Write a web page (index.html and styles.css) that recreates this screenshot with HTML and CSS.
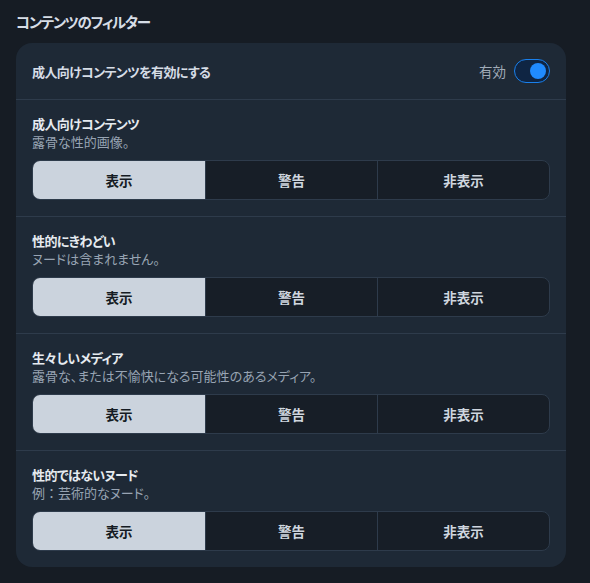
FILE: index.html
```html
<!DOCTYPE html>
<html lang="ja">
<head>
<meta charset="utf-8">
<link rel="stylesheet" href="styles.css">
</head>
<body>
<div class="page">
  <h2 class="heading">コンテンツのフィルター</h2>
  <div class="card">
    <div class="row header">
      <span class="header-label">成人向けコンテンツを有効にする</span>
      <div class="toggle-wrap">
        <span class="toggle-label">有効</span>
        <span class="toggle"><span class="knob"></span></span>
      </div>
    </div>
    <div class="row section">
      <div class="title">成人向けコンテンツ</div>
      <div class="desc">露骨な性的画像。</div>
      <div class="seg">
        <div class="opt active">表示</div>
        <div class="opt">警告</div>
        <div class="opt">非表示</div>
      </div>
    </div>
    <div class="row section">
      <div class="title">性的にきわどい</div>
      <div class="desc">ヌードは含まれません。</div>
      <div class="seg">
        <div class="opt active">表示</div>
        <div class="opt">警告</div>
        <div class="opt">非表示</div>
      </div>
    </div>
    <div class="row section">
      <div class="title">生々しいメディア</div>
      <div class="desc">露骨な、または不愉快になる可能性のあるメディア。</div>
      <div class="seg">
        <div class="opt active">表示</div>
        <div class="opt">警告</div>
        <div class="opt">非表示</div>
      </div>
    </div>
    <div class="row section">
      <div class="title">性的ではないヌード</div>
      <div class="desc">例<span class="fw">：</span>芸術的なヌード。</div>
      <div class="seg">
        <div class="opt active">表示</div>
        <div class="opt">警告</div>
        <div class="opt">非表示</div>
      </div>
    </div>
  </div>
</div>
</body>
</html>
```

FILE: styles.css
```css
* { box-sizing: border-box; }
html, body {
  margin: 0;
  padding: 0;
  background: #161c24;
}
body {
  font-family: "Noto Sans CJK JP", "Noto Sans", sans-serif;
  font-feature-settings: "palt";
  color: #d6dde6;
}
.page {
  padding: 11px 24px 16px 16px;
}
.heading {
  margin: 0 0 10px 0;
  font-size: 14.5px;
  letter-spacing: -1.3px;
  font-weight: 600;
  line-height: 22px;
  color: #d6dde6;
}
.card {
  background: #1e2936;
  border-radius: 16px;
  overflow: hidden;
}
.row {
  padding: 0 16px;
  border-top: 1px solid #2e3b4b;
}
.row:first-child { border-top: none; }
.header {
  height: 56px;
  display: flex;
  align-items: center;
  justify-content: space-between;
}
.header-label {
  font-size: 13px;
  letter-spacing: -0.6px;
  font-weight: 600;
  color: #d6dde6;
}
.toggle-wrap {
  display: flex;
  align-items: center;
  gap: 8px;
}
.toggle-label {
  font-size: 13.5px;
  color: #a0abb8;
}
.toggle {
  width: 36px;
  height: 24px;
  border-radius: 12px;
  border: 1.5px solid #1a80ec;
  background: #0f2543;
  display: flex;
  align-items: center;
  justify-content: flex-end;
  padding-right: 3px;
}
.knob {
  width: 16px;
  height: 16px;
  border-radius: 50%;
  background: #208bfe;
}
.section {
  padding-top: 15px;
  padding-bottom: 16px;
}
.title {
  font-size: 13px;
  letter-spacing: -0.6px;
  font-weight: 700;
  line-height: 18px;
  color: #e6ebf0;
}
.desc {
  font-size: 13px;
  line-height: 18px;
  color: #98a4b3;
}
.fw {
  font-feature-settings: normal;
}
.seg {
  margin-top: 9px;
  height: 40px;
  display: grid;
  grid-template-columns: 1fr 1fr 1fr;
  border: 1px solid #2e3b4b;
  border-radius: 8px;
  overflow: hidden;
  background: #171e27;
}
.opt {
  display: flex;
  align-items: center;
  justify-content: center;
  font-size: 13.5px;
  font-weight: 700;
  color: #cfd6df;
  border-left: 1px solid #2e3b4b;
}
.opt:first-child { border-left: none; }
.opt.active {
  background: #cbd3dd;
  color: #151b23;
}
```
